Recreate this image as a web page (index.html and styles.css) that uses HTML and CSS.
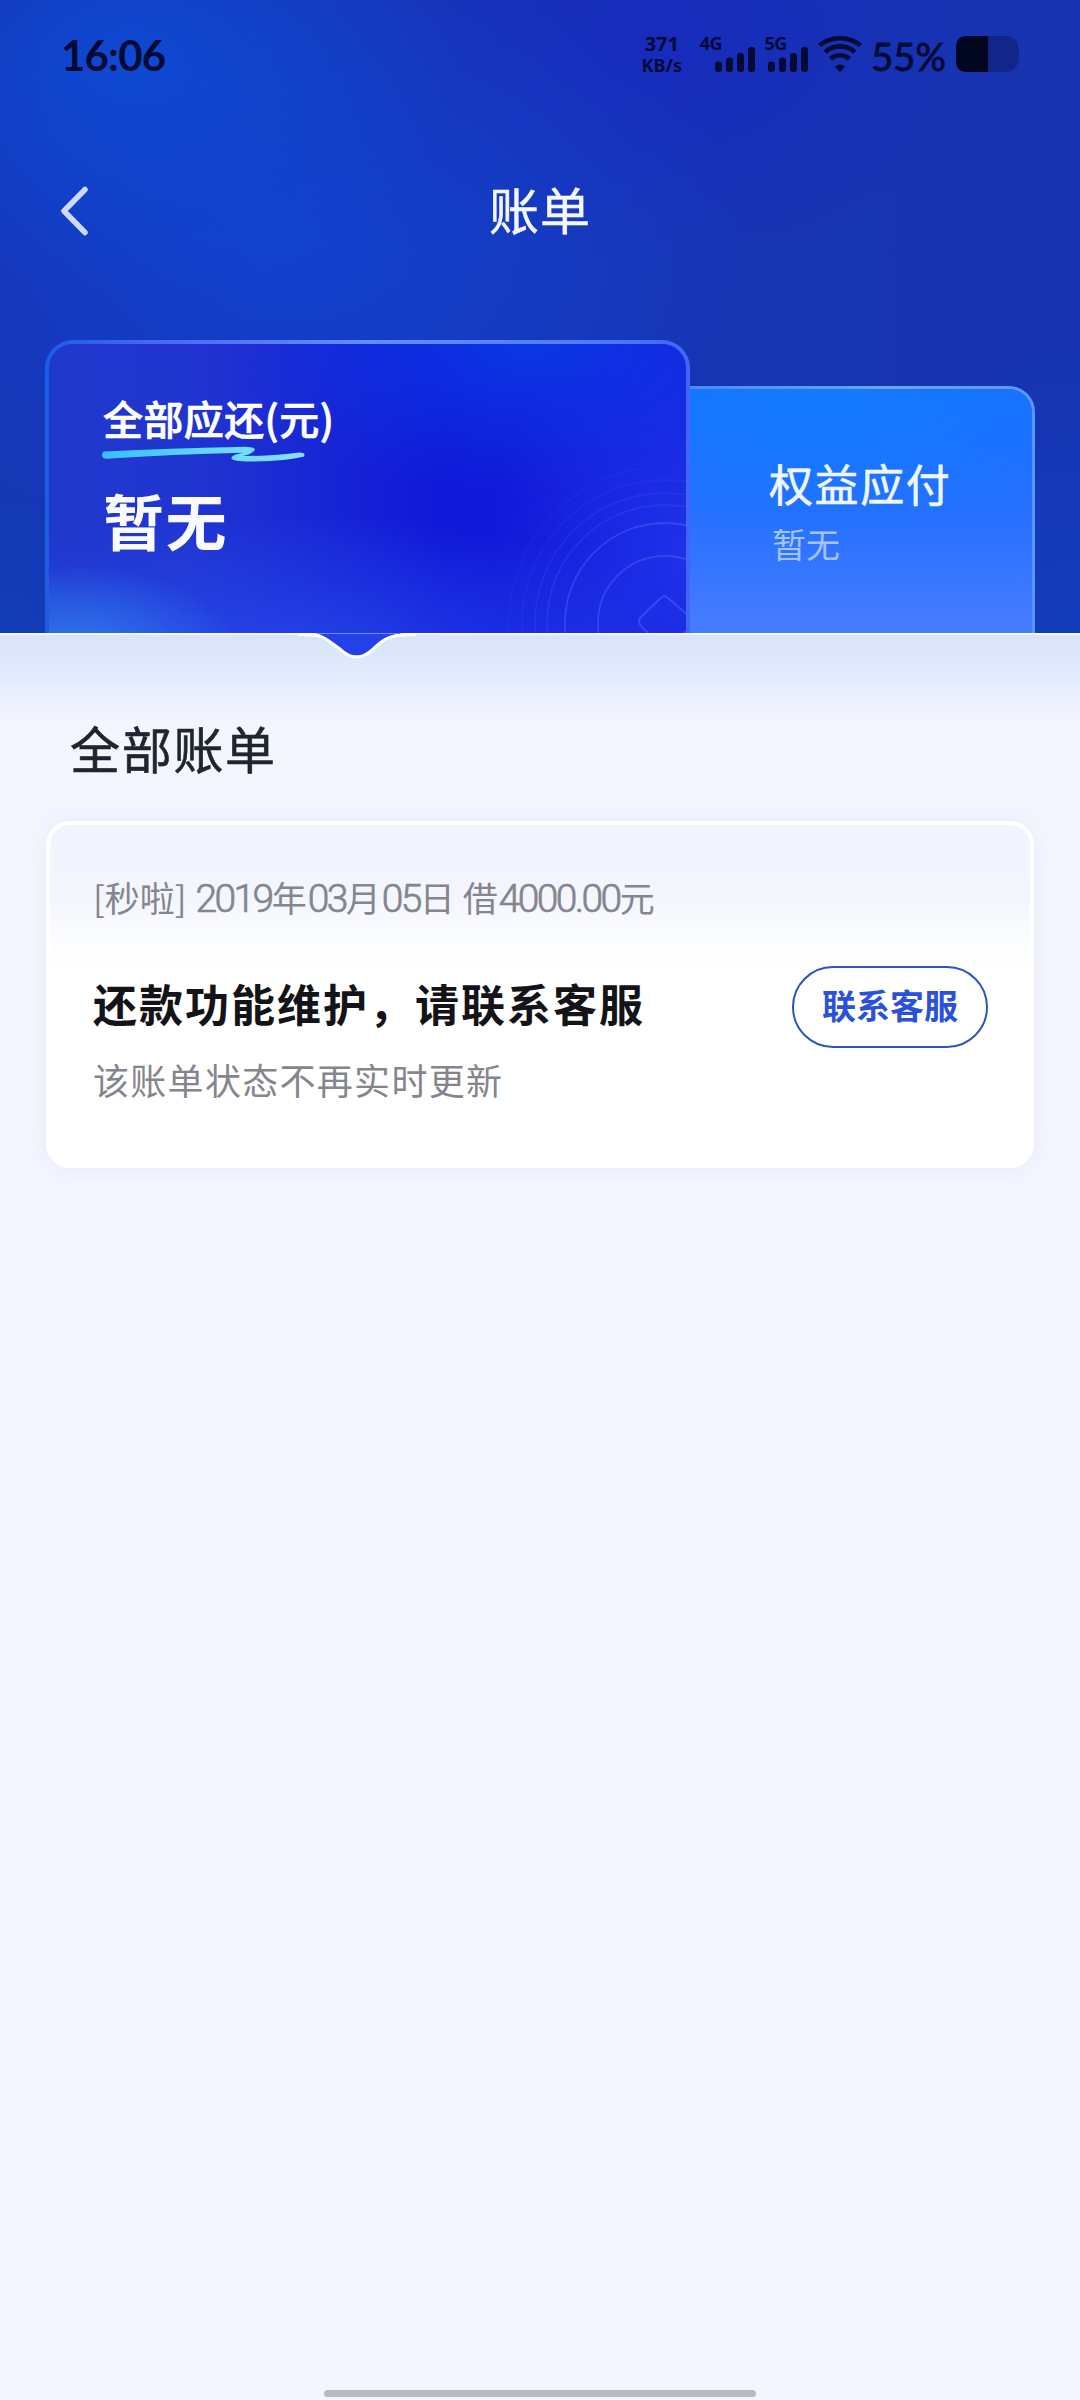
FILE: index.html
```html
<!DOCTYPE html>
<html lang="zh-CN">
<head>
<meta charset="utf-8">
<title>账单</title>
<link rel="stylesheet" href="styles.css">
</head>
<body>
<div class="screen">
  <header class="hero">
    <div class="status">
      <span class="clock">16:06</span>
      <div class="rate"><span>371</span><span>KB/s</span></div>
      <div class="cell cell-4g">
        <span class="net">4G</span>
        <svg class="bars" width="40" height="25" viewBox="0 0 40 25"><rect x="0" y="14.500" width="7" height="10.500" rx="3"/><rect x="11" y="10.500" width="7" height="14.500" rx="3"/><rect x="22" y="6" width="7" height="19" rx="3"/><rect x="33" y="0" width="7" height="25" rx="3"/></svg>
      </div>
      <div class="cell cell-5g">
        <span class="net">5G</span>
        <svg class="bars" width="40" height="25" viewBox="0 0 40 25"><rect x="0" y="14.500" width="7" height="10.500" rx="3"/><rect x="11" y="10.500" width="7" height="14.500" rx="3"/><rect x="22" y="6" width="7" height="19" rx="3"/><rect x="33" y="0" width="7" height="25" rx="3"/></svg>
      </div>
      <svg class="wifi" width="44" height="38" viewBox="0 0 44 38" fill="none" stroke="#030b35" stroke-width="4.600">
        <path d="M1.500 10.300C12.500 0.800 31.500 0.800 42.500 10.300"/>
        <path d="M7 17C15.500 9.500 28.500 9.500 37 17"/>
        <path d="M12.500 23.800C18 19 26 19 31.500 23.800"/>
        <path d="M17 31.500Q22 27.500 27 31.500L22 37Z" fill="#030b35" stroke="none"/>
      </svg>
      <span class="percent">55%</span>
      <svg class="battery" width="63" height="36" viewBox="0 0 63 36">
        <path d="M32 0H50Q63 0 63 18T50 36H32Z" fill="#12268a"/>
        <path d="M32 0H11Q0 0 0 11V25Q0 36 11 36H32Z" fill="#020720"/>
      </svg>
    </div>
    <nav class="nav">
      <svg class="back" width="30" height="50" viewBox="0 0 30 50" fill="none" stroke="#cfdafb" stroke-width="5.500" stroke-linecap="round" stroke-linejoin="round"><path d="M25 3.500L4 25L25 46.500"/></svg>
      <h1 class="title">账单</h1>
    </nav>
    <div class="tabs">
      <section class="tab tab-active">
        <svg class="rings" width="184" height="165" viewBox="0 0 184 165" fill="none" stroke="#6b85ff" stroke-width="1.800">
          <g transform="translate(4 2)">
            <circle cx="159" cy="153" r="67" opacity=".3"/>
            <circle cx="159" cy="153" r="100" opacity=".3"/>
            <circle cx="159" cy="153" r="118" opacity=".15"/>
            <circle cx="159" cy="153" r="130" opacity=".11"/>
            <circle cx="159" cy="153" r="143" opacity=".08"/>
            <circle cx="159" cy="153" r="156" opacity=".06"/>
            <path d="M155 128Q158 124.500 162 128L184 147M155 128L135 147Q131 151 135 156L144 165M174 165L184 159" opacity=".35"/>
          </g>
        </svg>
        <div class="due">
          <h2 class="due-label">全部应还(元)</h2>
          <svg class="scribble" width="204" height="18" viewBox="0 0 204 18">
            <defs><linearGradient id="ink" x1="0" x2="204" y1="0" y2="0" gradientUnits="userSpaceOnUse"><stop offset="0" stop-color="#37bdff"/><stop offset=".6" stop-color="#67dcff"/><stop offset="1" stop-color="#8edcff"/></linearGradient></defs>
            <path d="M2 5.500Q70 2 135 1Q155 0 152.500 4.500Q149 8.500 141 10Q172 10 197 6.500Q204 6.500 202 10.500Q184 15 149 15.500Q128 15.500 129.500 11.500Q131 8.500 141 6.800Q70 8.500 5 12.800Q0 13 0 9Q0 6 2 5.500Z" fill="url(#ink)"/>
          </svg>
        </div>
        <p class="due-value">暂无</p>
      </section>
      <section class="tab tab-side">
        <h2 class="side-label">权益应付</h2>
        <p class="side-value">暂无</p>
      </section>
    </div>
  </header>
  <main class="sheet">
    <svg class="notch" width="120" height="28" viewBox="0 0 120 28">
      <path d="M18 0H104C90 2 84 6 75 16C64 26.500 53 26.500 42 16C28 5 24 2 18 0Z" fill="#2441e8"/>
      <path d="M0 1.500C26 1 25 4 42 16C53 26.500 64 26.500 75 16C88 3 94 2 118 1.500" fill="none" stroke="#fff" stroke-width="3"/>
      <path d="M20 .5H102" stroke="#6f8bf5" stroke-width="1"/>
    </svg>
    <h2 class="heading">全部账单</h2>
    <article class="bill">
      <p class="meta">[秒啦] <span class="num">2019</span>年<span class="num">03</span>月<span class="num">05</span>日 借<span class="num">4000.00</span>元</p>
      <div class="row">
        <h3 class="notice">还款功能维护，请联系客服</h3>
        <button class="contact" type="button">联系客服</button>
      </div>
      <p class="hint">该账单状态不再实时更新</p>
    </article>
  </main>
  <div class="home-bar"></div>
</div>
</body>
</html>
```
FILE: styles.css
```css
* { box-sizing: border-box; margin: 0; padding: 0; }
body { width: 1080px; background: #f3f6fe; font-family: "Noto Sans CJK SC", sans-serif; }
svg { display: block; flex: none; }
h1, h2, h3 { font-weight: 400; }

.screen {
  display: flex;
  flex-direction: column;
  height: 2400px;
  background: #f3f6fe;
  overflow: hidden;
}

.hero {
  display: flex;
  flex-direction: column;
  height: 633px;
  background:
    radial-gradient(ellipse 330px 240px at 130px 60px, rgba(13, 76, 214, .85), rgba(13, 76, 214, 0)),
    radial-gradient(ellipse 460px 300px at 290px 250px, rgba(18, 67, 210, .9), rgba(18, 67, 210, 0)),
    radial-gradient(ellipse 330px 220px at 650px 40px, rgba(23, 42, 190, .9), rgba(23, 42, 190, 0)),
    radial-gradient(ellipse 300px 330px at 0 633px, rgba(18, 62, 184, .9), rgba(18, 62, 184, 0)),
    radial-gradient(ellipse 260px 300px at 1080px 633px, rgba(18, 62, 190, .9), rgba(18, 62, 190, 0)),
    linear-gradient(90deg, #1732b2, #1735b5 50%, #1733b0);
}

.status {
  display: flex;
  height: 108px;
  padding: 0 61px;
  color: #030b35;
  font-family: Lato, sans-serif;
}
.clock { width: 580px; padding-top: 29px; font-size: 42px; line-height: 52px; font-weight: 700; letter-spacing: -.8px; }
.rate {
  display: flex;
  flex-direction: column;
  align-items: center;
  width: 46px;
  padding-top: 33px;
  font: 700 20px/22px "Noto Sans", sans-serif;
}
.rate span:last-child { font-size: 18px; line-height: 20px; }
.cell { width: 56px; padding-top: 34px; font: 700 18px/18px "Noto Sans", sans-serif; }
.cell-4g { margin-left: 15px; }
.cell-5g { margin-left: 9px; }
.net { display: block; height: 13px; letter-spacing: -.5px; }
.bars { margin-left: 15px; fill: #030b35; }
.cell-5g .bars { margin-left: 3px; }
.wifi { margin: 35px 0 0 -2px; }
.percent { width: 82px; margin-left: 9px; padding-top: 33px; font-size: 38px; line-height: 46px; -webkit-text-stroke: .9px #030b35; }
.battery { margin-top: 36px; margin-left: 3px; }

.nav {
  display: grid;
  grid-template-columns: 160px 1fr 160px;
  align-items: center;
  height: 200px;
}
.back { margin-left: 60px; margin-top: 5px; }
.title { color: #f4f7ff; font-size: 50px; line-height: 60px; letter-spacing: 1px; text-align: center; -webkit-text-stroke: .5px #f4f7ff; }

.tabs {
  display: flex;
  align-items: flex-end;
  height: 293px;
  margin-top: 32px;
  padding: 0 45px;
}
.tab-active {
  position: relative;
  z-index: 1;
  width: 645px;
  height: 293px;
  padding: 51px 54px 0;
  border: 4px solid transparent;
  border-bottom: 0;
  border-radius: 28px 28px 0 0;
  background:
    radial-gradient(ellipse 170px 90px at 20px 310px, rgba(48, 126, 236, 1), rgba(48, 126, 236, 0)) padding-box,
    radial-gradient(ellipse 440px 150px at 230px 320px, rgba(38, 72, 236, .9), rgba(38, 72, 236, 0)) padding-box,
    radial-gradient(ellipse 300px 150px at 480px 0, rgba(10, 56, 228, .95), rgba(10, 56, 228, 0)) padding-box,
    radial-gradient(ellipse 200px 280px at 645px 210px, rgba(32, 56, 236, .8), rgba(32, 56, 236, 0)) padding-box,
    linear-gradient(90deg, #2038cc, #2135d0 22%, #1622d6 48%, #1018d8 62%, #171bdc) padding-box,
    linear-gradient(90deg, #1d5ce8, #4467f0 15%, #648dff 50%, #4d7bfa 85%, #3f66f8) border-box;
}
.rings { position: absolute; right: 0; bottom: 0; width: 184px; height: 165px; }
.due { height: 88px; }
.due-label { color: #fff; font-size: 40px; line-height: 46px; font-weight: 500; letter-spacing: .4px; white-space: nowrap; -webkit-text-stroke: .7px #fff; }
.scribble { margin: 5px 0 0 -1px; }
.due-value { padding-top: 1px; color: #f8faff; font-size: 61px; line-height: 72px; font-weight: 700; letter-spacing: 1.500px; }

.tab-side {
  width: 371px;
  height: 247px;
  margin-left: -26px;
  padding: 62px 0 0 102px;
  border: 3px solid transparent;
  border-bottom: 0;
  border-radius: 0 26px 0 0;
  background:
    radial-gradient(ellipse 270px 150px at 150px 0, rgba(18, 124, 255, .9), rgba(18, 124, 255, 0)) padding-box,
    linear-gradient(#1670ff, #2570ff 50%, #487cff) padding-box,
    linear-gradient(90deg, #4387ff, #68aaff 60%, #5b95ff) border-box;
}
.side-label { color: #f0f6ff; font-size: 44px; line-height: 64px; letter-spacing: 1.600px; -webkit-text-stroke: .6px #f0f6ff; }
.side-value { margin: 4px 0 0 3px; color: #a4c4ff; font-size: 34px; line-height: 50px; }

.sheet {
  position: relative;
  flex: 1;
  padding: 82px 46px 0;
  border-top: 2px solid #f4f8ff;
  background: linear-gradient(#d8e3fc, #e4ecfc 45px, #f3f6fe 85px);
}
.notch { position: absolute; left: 298px; top: -2px; }
.heading { padding-left: 24px; color: #1f2433; font-size: 50px; line-height: 60px; letter-spacing: 1.700px; -webkit-text-stroke: .6px #1f2433; }
.bill {
  height: 347px;
  margin-top: 44px;
  padding: 51px 42px 0 43px;
  border: 4px solid #fff;
  border-radius: 24px;
  background: linear-gradient(#f1f4fe, #f4f6fe 75px, #fbfcff 110px, #fff 150px);
  box-shadow: 0 0 24px rgba(60, 70, 100, .06);
}
.meta { color: #85858d; font-size: 35px; line-height: 42px; white-space: nowrap; }
.num { margin-left: 1px; font-family: Roboto, sans-serif; font-size: 39px; line-height: 42px; font-weight: 300; letter-spacing: -2.600px; -webkit-text-stroke: .7px #85858d; }
.row { display: flex; align-items: flex-start; justify-content: space-between; height: 82px; margin-top: 46px; }
.notice { padding-top: 9px; color: #141418; font-size: 44px; line-height: 56px; font-weight: 700; letter-spacing: 2px; white-space: nowrap; }
.contact {
  width: 196px;
  height: 82px;
  padding-bottom: 5px;
  border: 2px solid #2f53c0;
  border-radius: 41px;
  background: #fff;
  color: #2952d8;
  font: 700 34px/40px "Noto Sans CJK SC", sans-serif;
}
.hint { margin-top: 8px; color: #85858d; font-size: 36px; line-height: 46px; letter-spacing: 1.300px; }

.home-bar { width: 432px; height: 7px; margin: 0 auto 3px; border-radius: 4px; background: #b9bac2; }
```
